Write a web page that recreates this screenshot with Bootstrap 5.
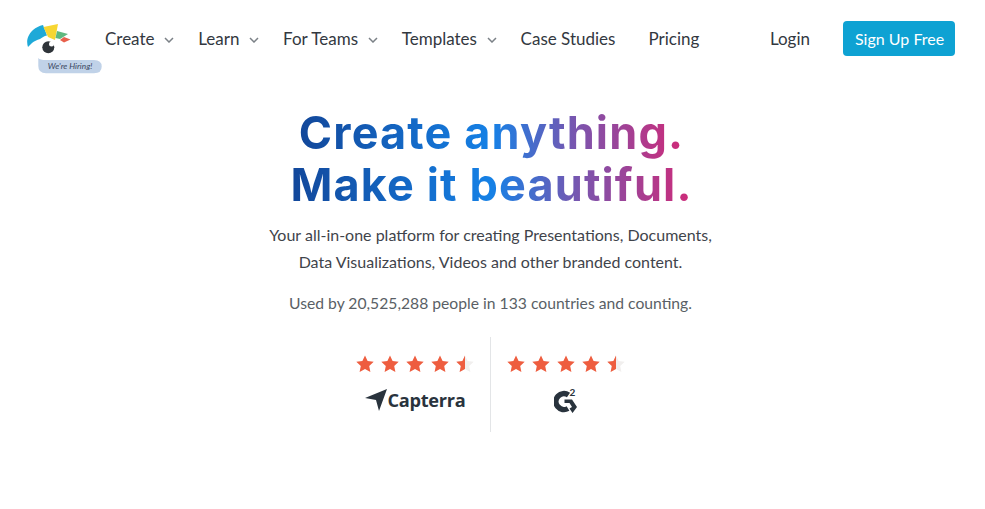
<!DOCTYPE html>
<html lang="en">
<head>
    <meta charset="UTF-8">
    <meta name="viewport" content="width=device-width, initial-scale=1.0">
    <title>Create anything. Make it beautiful.</title>
    <link href="https://cdn.jsdelivr.net/npm/bootstrap@5.3.0/dist/css/bootstrap.min.css" rel="stylesheet">
    <style>
        body { font-family: Lato, "Liberation Sans", sans-serif; color: #33383f; background: #fff; overflow: hidden; }
        .top-bar { height: 78px; padding: 21px 30px 0 27px; align-items: flex-start; }
        .brand-box { width: 78px; height: 56px; margin-top: 1px; flex: none; }
        .menu-link { color: #33383f; font-size: 17px; line-height: 35px; text-decoration: none; white-space: nowrap; }
        .menu-chevron { width: 10px; height: 6px; margin-left: 9.7px; margin-top: 2px; }
        .menu-links { gap: 24px; }
        .menu-gap { margin-left: 9px; }
        .signup-btn { background: #0ea2d3; color: #fff; font-size: 16px; line-height: 35px; padding: 0 12px; border: 0; border-radius: 4px; width: 112px; height: 35px; white-space: nowrap; }
        .login-link { margin-left: auto; margin-right: 33px; }
        .hero-area { padding-right: 4px; }
        .hero-title { font-family: Inter, "Open Sans", sans-serif; font-weight: 700; font-size: 45px; line-height: 51.5px; letter-spacing: 1.15px; margin: 29px 0 0 2px; }
        .hero-line { display: block; width: fit-content; margin: 0 auto; background: linear-gradient(90deg, #12479a 0%, #1581e6 50%, #7a55ae 72%, #cf2a78 100%); -webkit-background-clip: text; background-clip: text; color: transparent; }
        .hero-sub { font-size: 16px; line-height: 27px; color: #3f444b; margin: 11px 0 0; }
        .hero-count { font-size: 15.7px; line-height: 27px; color: #5a5f66; margin: 15px 0 0; }
        .rating-row { margin-top: 20px; height: 95px; padding-right: 1px; }
        .rating-cell { width: 150px; padding-top: 17px; }
        .rating-cell + .rating-cell { border-left: 1px solid #e3e5e7; }
        .star-row { gap: 5px; height: 20px; }
        .brand-row { height: 30px; margin-top: 11px; color: #29333d; }
        .capterra-name { font-family: "Open Sans", sans-serif; font-weight: 700; font-size: 18.2px; line-height: 30px; letter-spacing: -.3px; }
        .capterra-row { gap: 1px; }
    </style>
</head>
<body>
    <!-- Top navigation -->
    <nav class="d-flex top-bar">
        <a href="#" class="brand-box d-block">
            <svg width="78" height="56" viewBox="0 0 78 56">
                <path d="M1 25C-.5 21 -.5 14 6 8C9 5.500 12 4 16 3L20 13.500C17 14 15 15.500 13 17C10 18 7 19 5 21Z" fill="#1ea9d8"/>
                <path d="M16.500 5L31 2L28 18L21 15Z" fill="#f7d632"/>
                <path d="M30 9L41 12L33 17L28.500 16Z" fill="#5fb87f"/>
                <path d="M33 18L37 15L43.500 17.500L37 20.500Z" fill="#e8604c"/>
                <circle cx="21.300" cy="25.300" r="6" fill="#2f3439"/>
                <circle cx="24.500" cy="22" r="2.500" fill="#fff"/>
                <path d="M11.300 36Q13 38 19 38H67Q74.700 38 74.700 44.500Q74.700 51.300 67 51.300H19Q11.300 51.300 11.300 44Z" fill="#c0d2e8"/>
                <text x="43" y="47" text-anchor="middle" font-family="Lato, sans-serif" font-size="8.300" font-style="italic" fill="#3a4660">We're Hiring!</text>
            </svg>
        </a>
        <div class="d-flex menu-links">
            <a href="#" class="menu-link d-flex align-items-center">Create
                <svg class="menu-chevron" viewBox="0 0 10 6"><path d="M1 1l4 4 4-4" fill="none" stroke="#7b8187" stroke-width="1.5"/></svg></a>
            <a href="#" class="menu-link d-flex align-items-center">Learn
                <svg class="menu-chevron" viewBox="0 0 10 6"><path d="M1 1l4 4 4-4" fill="none" stroke="#7b8187" stroke-width="1.5"/></svg></a>
            <a href="#" class="menu-link d-flex align-items-center">For Teams
                <svg class="menu-chevron" viewBox="0 0 10 6"><path d="M1 1l4 4 4-4" fill="none" stroke="#7b8187" stroke-width="1.5"/></svg></a>
            <a href="#" class="menu-link d-flex align-items-center">Templates
                <svg class="menu-chevron" viewBox="0 0 10 6"><path d="M1 1l4 4 4-4" fill="none" stroke="#7b8187" stroke-width="1.5"/></svg></a>
            <a href="#" class="menu-link">Case Studies</a>
            <a href="#" class="menu-link menu-gap">Pricing</a>
        </div>
        <a href="#" class="menu-link login-link">Login</a>
        <button class="btn signup-btn">Sign Up Free</button>
    </nav>

    <!-- Hero -->
    <main class="text-center hero-area">
        <h1 class="hero-title">
            <span class="hero-line">Create anything.</span>
            <span class="hero-line">Make it beautiful.</span>
        </h1>
        <p class="hero-sub">Your all-in-one platform for creating Presentations, Documents,<br>Data Visualizations, Videos and other branded content.</p>
        <p class="hero-count">Used by 20,525,288 people in 133 countries and counting.</p>

        <div class="d-flex justify-content-center rating-row">
            <div class="rating-cell">
                <div class="d-flex justify-content-center star-row">
                    <svg width="20" height="20" viewBox="0 0 20 20"><path d="M10 1.500l2.600 5.600 6.100.7-4.500 4.200 1.200 6L10 15l-5.400 3 1.200-6-4.500-4.200 6.100-.7Z" fill="#ee5d3f"/></svg>
                    <svg width="20" height="20" viewBox="0 0 20 20"><path d="M10 1.500l2.600 5.600 6.100.7-4.500 4.200 1.200 6L10 15l-5.400 3 1.200-6-4.500-4.200 6.100-.7Z" fill="#ee5d3f"/></svg>
                    <svg width="20" height="20" viewBox="0 0 20 20"><path d="M10 1.500l2.600 5.600 6.100.7-4.500 4.200 1.200 6L10 15l-5.400 3 1.200-6-4.500-4.200 6.100-.7Z" fill="#ee5d3f"/></svg>
                    <svg width="20" height="20" viewBox="0 0 20 20"><path d="M10 1.500l2.600 5.600 6.100.7-4.500 4.200 1.200 6L10 15l-5.400 3 1.200-6-4.500-4.200 6.100-.7Z" fill="#ee5d3f"/></svg>
                    <svg width="20" height="20" viewBox="0 0 20 20"><path d="M10 1.500l2.600 5.600 6.100.7-4.500 4.200 1.200 6L10 15l-5.400 3 1.200-6-4.500-4.200 6.100-.7Z" fill="#f1efee"/><path d="M10 1.500V15l-5.400 3 1.200-6-4.500-4.200 6.100-.7Z" fill="#ee5d3f"/></svg>
                </div>
                <div class="d-flex justify-content-center align-items-center capterra-row brand-row">
                    <svg width="22" height="22" viewBox="0 0 22 22"><path d="M0 9L22 0L14 22L11 11Z" fill="#29333d"/></svg>
                    <span class="capterra-name">Capterra</span>
                </div>
            </div>
            <div class="rating-cell">
                <div class="d-flex justify-content-center star-row">
                    <svg width="20" height="20" viewBox="0 0 20 20"><path d="M10 1.500l2.600 5.600 6.100.7-4.500 4.200 1.200 6L10 15l-5.400 3 1.200-6-4.500-4.200 6.100-.7Z" fill="#ee5d3f"/></svg>
                    <svg width="20" height="20" viewBox="0 0 20 20"><path d="M10 1.500l2.600 5.600 6.100.7-4.500 4.200 1.200 6L10 15l-5.400 3 1.200-6-4.500-4.200 6.100-.7Z" fill="#ee5d3f"/></svg>
                    <svg width="20" height="20" viewBox="0 0 20 20"><path d="M10 1.500l2.600 5.600 6.100.7-4.500 4.200 1.200 6L10 15l-5.400 3 1.200-6-4.500-4.200 6.100-.7Z" fill="#ee5d3f"/></svg>
                    <svg width="20" height="20" viewBox="0 0 20 20"><path d="M10 1.500l2.600 5.600 6.100.7-4.500 4.200 1.200 6L10 15l-5.400 3 1.200-6-4.500-4.200 6.100-.7Z" fill="#ee5d3f"/></svg>
                    <svg width="20" height="20" viewBox="0 0 20 20"><path d="M10 1.500l2.600 5.600 6.100.7-4.500 4.200 1.200 6L10 15l-5.400 3 1.200-6-4.500-4.200 6.100-.7Z" fill="#f1efee"/><path d="M10 1.500V15l-5.400 3 1.200-6-4.500-4.200 6.100-.7Z" fill="#ee5d3f"/></svg>
                </div>
                <div class="d-flex justify-content-center align-items-center brand-row">
                    <svg width="24" height="26" viewBox="0 -2 24 26">
                        <path d="M14.500 6A8 8 0 1 0 14 19.500" fill="none" stroke="#29333d" stroke-width="5.500"/>
                        <path d="M10.500 10.500h7.500l5 7.500-4.500 6-3-4.500 2.500-1.500-2.500-4h-5Z" fill="#29333d"/>
                        <text x="18.500" y="7" text-anchor="middle" font-family="Lato, sans-serif" font-weight="700" font-size="10" fill="#29333d">2</text>
                    </svg>
                </div>
            </div>
        </div>
    </main>

    <script src="https://cdn.jsdelivr.net/npm/bootstrap@5.3.0/dist/js/bootstrap.bundle.min.js"></script>
</body>
</html>
